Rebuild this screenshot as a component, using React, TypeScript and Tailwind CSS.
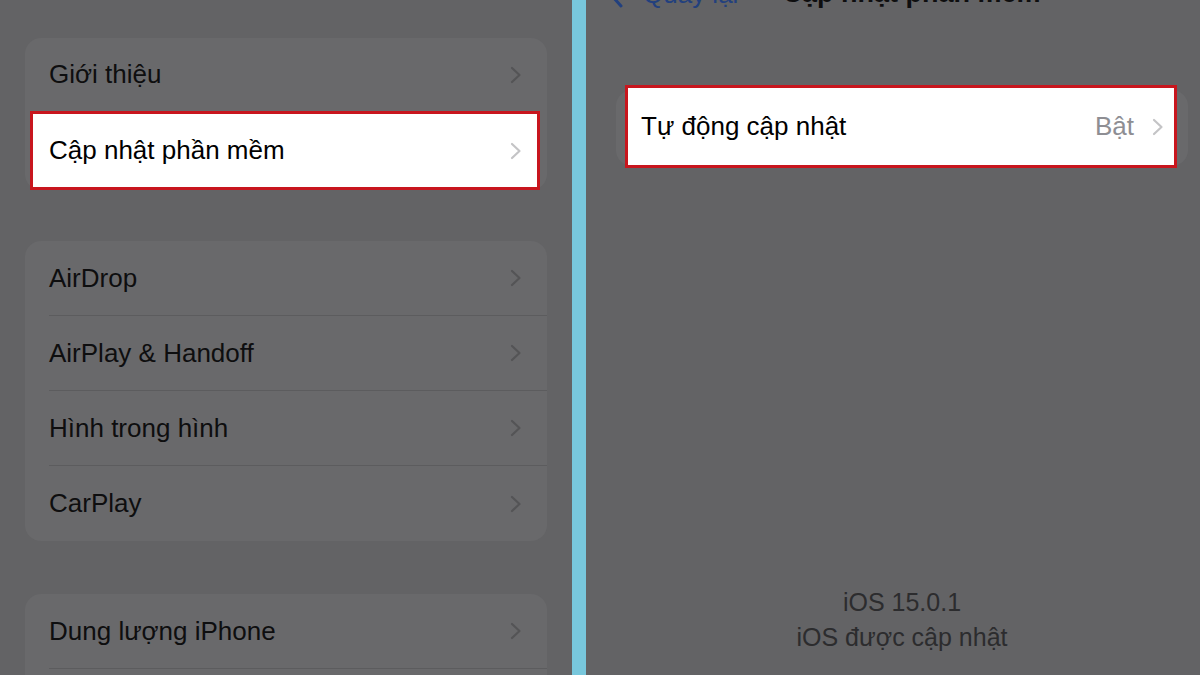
import type { ReactNode } from "react";

const font = { fontFamily: '"Liberation Sans", Arial, sans-serif' };

function Chevron({ color }: { color: string }) {
  return (
    <svg width="12" height="18" viewBox="0 0 12 18" fill="none">
      <path
        d="M2 2l7.5 7-7.5 7"
        stroke={color}
        strokeWidth="2.2"
        strokeLinecap="round"
        strokeLinejoin="round"
      />
    </svg>
  );
}

function Row({ label, last }: { label: string; last?: boolean }) {
  return (
    <div className="ml-[24px]">
      <div
        className={
          "flex h-[75px] items-center justify-between pr-[25px] " +
          (last ? "" : "border-b border-[#5c5c5e]")
        }
      >
        <span className="text-[26px] text-[#0e0e0f]">{label}</span>
        <Chevron color="#545456" />
      </div>
    </div>
  );
}

function Card({ children, className }: { children: ReactNode; className?: string }) {
  return (
    <div className={"rounded-[16px] bg-[#69696b] " + (className ?? "")}>{children}</div>
  );
}

export default function App() {
  return (
    <div className="flex h-[675px] w-[1200px] overflow-hidden bg-[#636365]" style={font}>
      {/* left: Cài đặt chung */}
      <div className="flex w-[572px] flex-col px-[25px] pt-[38px]">
        <Card>
          <div className="flex h-[73px] items-center justify-between pl-[24px] pr-[25px]">
            <span className="text-[26px] text-[#0e0e0f]">Giới thiệu</span>
            <Chevron color="#545456" />
          </div>
          <div className="ml-[5px] mr-[7px] flex h-[79px] items-center justify-between border-[3px] border-[#c8161e] bg-white pl-[16px] pr-[15px]">
            <span className="text-[26px] text-black">Cập nhật phần mềm</span>
            <Chevron color="#c4c4c6" />
          </div>
        </Card>

        <Card className="mt-[51px]">
          <Row label="AirDrop" />
          <Row label="AirPlay & Handoff" />
          <Row label="Hình trong hình" />
          <Row label="CarPlay" last />
        </Card>

        <Card className="mt-[53px] rounded-b-none">
          <Row label="Dung lượng iPhone" />
          <div className="h-[40px]" />
        </Card>
      </div>

      <div className="w-[14px] bg-[#78c7dc]" />

      {/* right: Cập nhật phần mềm */}
      <div className="flex flex-1 flex-col">
        <div className="flex h-[7px] items-end pl-[25px]">
          <div className="flex items-end leading-none">
            <svg width="12" height="22" viewBox="0 0 12 22" fill="none" className="mb-[-1px]">
              <path d="M10 2L2 11l8 9" stroke="#22407e" strokeWidth="3" strokeLinecap="round" strokeLinejoin="round" />
            </svg>
            <span className="ml-[20px] text-[26px] text-[#22407e]">Quay lại</span>
            <span className="ml-[44px] text-[27px] font-bold text-[#0e0e0f]">Cập nhật phần mềm</span>
          </div>
        </div>

        <div className="ml-[30px] mr-[12px] mt-[83px] h-[76px] rounded-[16px] bg-[#69696b]">
          <div className="-mt-[5px] ml-[9px] mr-[11px] flex h-[83px] items-center justify-between border-[3px] border-[#c8161e] bg-white pl-[13px] pr-[10px]">
            <span className="text-[26px] text-black">Tự động cập nhật</span>
            <div className="flex items-center gap-[18px]">
              <span className="text-[26px] text-[#8e8e93]">Bật</span>
              <Chevron color="#c4c4c6" />
            </div>
          </div>
        </div>

        <div className="ml-[30px] mr-[12px] mt-[419px] flex flex-col items-center text-[25px] leading-[35px] text-[#2c2c2e]">
          <span>iOS 15.0.1</span>
          <span>iOS được cập nhật</span>
        </div>
      </div>
    </div>
  );
}
